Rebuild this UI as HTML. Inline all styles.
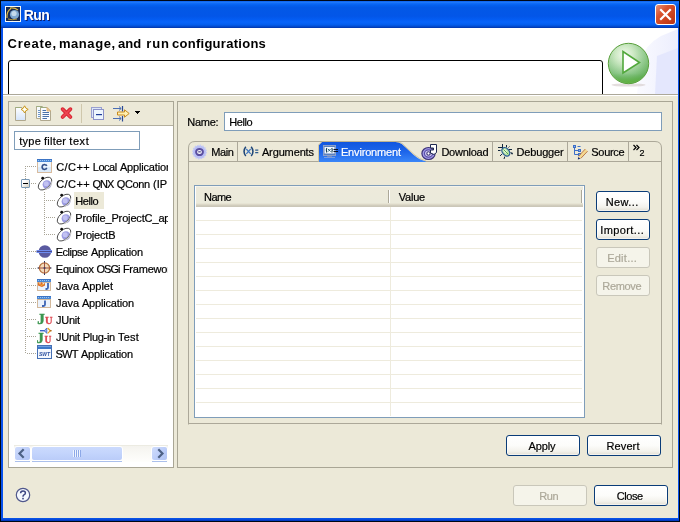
<!DOCTYPE html>
<html><head><meta charset="utf-8"><title>Run</title>
<style>
html,body{margin:0;padding:0}
body{width:680px;height:522px;overflow:hidden;position:relative;background:#0A3BD8;font-family:"Liberation Sans",sans-serif;font-size:11px}
div,span,svg{position:absolute}
.t{white-space:pre;-webkit-text-stroke:0.2px currentColor}.t.b{-webkit-text-stroke:0}
.ic{left:0;top:0}
.btn{border:1px solid #0A3C78;border-radius:3px;background:linear-gradient(#FFFFFF 0%,#FCFCFA 50%,#F3F2EC 80%,#E2DFD3 100%);box-shadow:inset 0 0 0 1px rgba(255,255,255,.55)}
.btn.dis{border-color:#C9C7BA;background:#F5F4EA;box-shadow:none}
.hd{height:1px;background:repeating-linear-gradient(90deg,#A8A496 0 1px,transparent 1px 2px)}
.vd{width:1px;background:repeating-linear-gradient(180deg,#A8A496 0 1px,transparent 1px 2px)}
.pane{border:1px solid #A9A695}
</style></head><body>
<div id="root" style="left:0;top:0;width:680px;height:522px;will-change:transform">
<!-- frame -->
<div style="left:0;top:0;width:680px;height:522px;background:#000714"></div>
<div style="left:1px;top:1px;width:678px;height:520px;background:#0852EC"></div><div style="left:1px;top:518px;width:678px;height:3px;background:linear-gradient(180deg,#0A58EA,#0648DA,#0232B4)"></div>
<!-- title bar -->
<div style="left:1px;top:1px;width:678px;height:27px;background:linear-gradient(180deg,#0A5EEE 0%,#1E78F8 5%,#0C68F6 10%,#0460EE 16%,#0358E6 24%,#0356E8 56%,#045CF2 68%,#0864FA 78%,#045EEE 87%,#0350D8 93%,#0240BC 97%,#0236AC 100%)"></div>
<svg style="left:5px;top:6px" width="16" height="16" viewBox="0 0 16 16"><rect x="0" y="0" width="16" height="16" fill="#F8F8F4"/><rect x="1" y="1" width="14" height="14" fill="#18284E"/><circle cx="9.500" cy="8.500" r="4.600" fill="#7FA8D0"/><circle cx="9" cy="7.500" r="2.600" fill="#C4DAEC"/><path d="M2 12 Q1.500 5 6 2.500 M5 2 Q10 1.500 13 4" fill="none" stroke="#D8B84A" stroke-width="1.200"/><path d="M3 13 Q7 14.500 12 13" fill="none" stroke="#B89A3A" stroke-width="1"/></svg>
<span class="t b" style="left:23.7135px;top:7px;font-size:14px;line-height:16px;letter-spacing:-0.573px;color:#fff;font-weight:bold;text-shadow:1px 1px 0 #0A1E6E;">Run</span>
<!-- close button -->
<div style="left:655px;top:4px;width:19px;height:19px;border:1px solid #fff;border-radius:3px;background:linear-gradient(135deg,#E8937A 0%,#D9532E 35%,#C8401C 70%,#B83414 100%)"></div>
<svg style="left:655px;top:4px" width="21" height="21" viewBox="0 0 21 21"><path d="M6 6 L15 15 M15 6 L6 15" stroke="#fff" stroke-width="2.2" stroke-linecap="square"/></svg>
<!-- header (white) -->
<div style="left:3px;top:28px;width:675px;height:66px;background:#fff"></div>
<svg style="left:603px;top:28px" width="75" height="66" viewBox="0 0 75 66"><defs><linearGradient id="lv" x1="0" x2="1"><stop offset="0" stop-color="#FAFAFF"/><stop offset="1" stop-color="#ECEEFD"/></linearGradient></defs><path d="M75 1 L58 8 Q42 17 38 32 L34 66 L75 66Z" fill="url(#lv)"/><path d="M75 20 L54 28 L52 66 L75 66Z" fill="#E2E6FD" opacity=".9"/></svg>
<span class="t b" style="left:7.58013px;top:36px;font-size:13px;line-height:15px;letter-spacing:0.760px;color:#000;font-weight:bold;">Create,</span><span class="t b" style="left:58.8893px;top:36px;font-size:13px;line-height:15px;letter-spacing:0.579px;color:#000;font-weight:bold;">manage,</span><span class="t b" style="left:117.879px;top:36px;font-size:13px;line-height:15px;letter-spacing:0.158px;color:#000;font-weight:bold;">and</span><span class="t b" style="left:146.241px;top:36px;font-size:13px;line-height:15px;letter-spacing:0.882px;color:#000;font-weight:bold;">run</span><span class="t b" style="left:171.94px;top:36px;font-size:13px;line-height:15px;letter-spacing:0.280px;color:#000;font-weight:bold;">configurations</span>
<div style="left:8px;top:60px;width:593px;height:40px;border:1px solid #000;border-radius:3px 3px 0 0;background:#fff;clip-path:inset(0 0 7px 0)"></div>
<!-- play icon -->
<svg style="left:604px;top:40px" width="50" height="50" viewBox="0 0 50 50"><defs><radialGradient id="pg" cx=".4" cy=".3" r=".75"><stop offset="0" stop-color="#F6FBF2"/><stop offset=".3" stop-color="#CFEAC6"/><stop offset=".65" stop-color="#94CC90"/><stop offset="1" stop-color="#62AE56"/></radialGradient><linearGradient id="pg2" x1="0" y1="0" x2="0" y2="1"><stop offset="0" stop-color="#fff" stop-opacity=".0"/><stop offset=".75" stop-color="#3C9A3C" stop-opacity=".12"/><stop offset="1" stop-color="#5CB030" stop-opacity=".75"/></linearGradient></defs><ellipse cx="24.5" cy="45" rx="17" ry="1.6" fill="#D8D0D0" opacity=".7"/><circle cx="24.5" cy="23.5" r="20.2" fill="url(#pg)" stroke="#5AA03C" stroke-width="1"/><circle cx="24.5" cy="23.5" r="19.5" fill="url(#pg2)"/><path d="M19 11.5 L19 33 L35.5 22.5Z" fill="#fff" stroke="#52A83C" stroke-width="1.6" stroke-linejoin="miter"/></svg>
<!-- separator -->
<div style="left:3px;top:94px;width:675px;height:1px;background:#ACA899"></div>
<div style="left:3px;top:95px;width:675px;height:1px;background:#fff"></div>
<!-- body beige -->
<div style="left:3px;top:96px;width:675px;height:422px;background:#ECE9D8"></div>
<!-- left pane -->
<div class="pane" style="left:8px;top:101px;width:164px;height:365px;background:#fff"></div>
<div style="left:9px;top:102px;width:164px;height:23px;background:#ECE9D8"></div>
<div style="left:9px;top:125px;width:164px;height:1px;background:#B4B0A0"></div>
<!-- toolbar icons -->
<svg style="left:14px;top:105px" width="16" height="17" viewBox="0 0 16 17"><defs><linearGradient id="pgr" x1="0" y1="0" x2="0" y2="1"><stop offset="0" stop-color="#fff"/><stop offset="1" stop-color="#D4E4FA"/></linearGradient></defs><path d="M1.500 2.500H8L11.500 6V15.500H1.500Z" fill="url(#pgr)" stroke="#B0A88E" stroke-width="1"/><path d="M1.500 2.500H7" stroke="#8CB070" stroke-dasharray="1 1"/><path d="M10.600 0.800 L11.900 3.100 L14.200 4.400 L11.900 5.700 L10.600 8 L9.300 5.700 L7 4.400 L9.300 3.100Z" fill="#FFF8D0" stroke="#C8961E" stroke-width="1"/><path d="M10.600 2.600V6.200M8.800 4.400H12.400" stroke="#fff" stroke-width=".9"/></svg>
<svg style="left:36px;top:105px" width="17" height="17" viewBox="0 0 17 17"><path d="M0.500 1.500H6.500L8.500 3.500V13.500H0.500Z" fill="#F6FAFE" stroke="#B0A88E"/><path d="M0.500 1.500H6" stroke="#8CB070" stroke-dasharray="1 1"/><path d="M2 5.500H4.500M2 7.500H4.500M2 9.500H4.500M2 11.500H4.500" stroke="#6E96C8"/><path d="M4.500 2.500H11L14.500 6V15.500H4.500Z" fill="#FAFCFF" stroke="#B0A88E"/><path d="M4.500 2.500H10" stroke="#8CB070" stroke-dasharray="1 1"/><path d="M11 2.500V6H14.500Z" fill="#F0D098" stroke="#D8A868" stroke-width=".8"/><path d="M6.500 5.500H10M6.500 7.500H13M6.500 9.500H13M6.500 11.500H13M6.500 13.500H11" stroke="#4A72AA"/></svg>
<svg style="left:59px;top:105px" width="16" height="17" viewBox="0 0 16 17"><path d="M3.6 4.2 L11.4 12 M11.4 4.2 L3.6 12" stroke="#D82430" stroke-width="3.8" stroke-linecap="round"/><path d="M3.6 4.2 L11.4 12 M11.4 4.2 L3.6 12" stroke="#EC4650" stroke-width="1.8" stroke-linecap="round"/></svg>
<div style="left:81px;top:104px;width:1px;height:19px;background:#CFC7AC"></div>
<svg style="left:90px;top:105px" width="16" height="17" viewBox="0 0 16 17"><rect x="1.5" y="2.5" width="10" height="10" fill="#DCE6F8" stroke="#9AA0D0"/><rect x="3.5" y="4.5" width="10" height="10" fill="#EEF6FE" stroke="#8C92C8"/><rect x="6" y="9" width="6" height="1.2" fill="#1E3C96"/></svg>
<svg style="left:112px;top:104px" width="20" height="19" viewBox="0 0 20 19"><path d="M1 4.5H9M7 2.5L9.2 4.5L7 6.5" stroke="#4A6EB4" fill="none"/><path d="M10.5 2V7.5" stroke="#2C4A96" stroke-width="1.2"/><path d="M1 14.5H9M7 12.5L9.2 14.5L7 16.5" stroke="#4A6EB4" fill="none"/><path d="M10.5 12V17.5" stroke="#2C4A96" stroke-width="1.2"/><path d="M5.5 8H12.5V5.8L17.2 9.5L12.5 13.2V11H5.5Z" fill="#FFF0B0" stroke="#C88A1E" stroke-width="1"/></svg>
<div style="left:135px;top:111px;width:5px;height:1px;background:#000"></div><div style="left:136px;top:112px;width:3px;height:1px;background:#000"></div><div style="left:137px;top:113px;width:1px;height:1px;background:#000"></div>
<!-- filter box -->
<div style="left:14px;top:131px;width:124px;height:17px;border:1px solid #7F9DB9;background:#fff"></div>
<span class="t" style="left:19.1504px;top:135px;font-size:11px;line-height:13px;letter-spacing:0.301px;color:#000;">type</span><span class="t" style="left:44.1016px;top:135px;font-size:11px;line-height:13px;letter-spacing:0.203px;color:#000;">filter</span><span class="t" style="left:69.2832px;top:135px;font-size:11px;line-height:13px;letter-spacing:0.566px;color:#000;">text</span>
<!-- tree -->
<div style="left:14px;top:155px;width:154px;height:290px;overflow:hidden;background:#fff">
<div style="left:-14px;top:-155px;width:300px;height:400px">
<div class="vd" style="left:25px;top:166px;height:13px"></div><div class="vd" style="left:25px;top:188px;height:166px"></div><div class="hd" style="left:27px;top:166px;width:10px"></div><div class="hd" style="left:31px;top:183px;width:6px"></div><div class="hd" style="left:46px;top:200px;width:10px"></div><div class="hd" style="left:46px;top:217px;width:10px"></div><div class="hd" style="left:46px;top:234px;width:10px"></div><div class="hd" style="left:27px;top:251px;width:10px"></div><div class="hd" style="left:27px;top:268px;width:10px"></div><div class="hd" style="left:27px;top:285px;width:10px"></div><div class="hd" style="left:27px;top:302px;width:10px"></div><div class="hd" style="left:27px;top:319px;width:10px"></div><div class="hd" style="left:27px;top:336px;width:10px"></div><div class="hd" style="left:27px;top:353px;width:10px"></div><div class="vd" style="left:44px;top:192px;height:43px"></div><div style="position:absolute;left:37px;top:159px;width:16px;height:16px"><svg class="ic" width="16" height="16" viewBox="0 0 16 16"><rect x="0" y="0" width="15" height="3" fill="#4A88D6"/><rect x="0" y="0" width="15" height="1" fill="#3C74C4"/><path d="M1 1.500H14" stroke="#9CC4F0" stroke-dasharray="1 1"/><rect x="0.5" y="3.5" width="14" height="10" fill="#DCEBFA" stroke="#C08040" stroke-dasharray="1 1"/><rect x="1" y="3" width="13" height="5" fill="#EEF6FD"/><text x="7.300" y="11.300" font-family="Liberation Sans" font-weight="bold" font-size="8.600" fill="#2C4A84" stroke="#2C4A84" stroke-width=".4" text-anchor="middle">C</text></svg></div><span class="t" style="left:56.2203px;top:161px;font-size:11px;line-height:13px;letter-spacing:0.441px;color:#000;">C/C++</span><span class="t" style="left:92.7703px;top:161px;font-size:11px;line-height:13px;letter-spacing:-0.459px;color:#000;">Local</span><span class="t" style="left:119.917px;top:161px;font-size:11px;line-height:13px;letter-spacing:-0.166px;color:#000;">Application</span><div style="position:absolute;left:37px;top:176px;width:16px;height:16px"><svg class="ic" width="17" height="16" viewBox="0 0 17 16"><circle cx="10" cy="8.6" r="4.4" fill="#9C9CE2"/><circle cx="9.2" cy="7.8" r="2.5" fill="#C2C2F2"/><ellipse cx="8" cy="7.6" rx="8" ry="4.7" transform="rotate(-42 8 7.6)" fill="none" stroke="#484848" stroke-width=".9"/><path d="M8.6 13.6 A 8 4.7 -42 0 0 14.8 5.4" fill="none" stroke="#C8C8C8" stroke-width="1.2"/><circle cx="5.7" cy="2.2" r="1.4" fill="#101010"/></svg></div><span class="t" style="left:56.2203px;top:178px;font-size:11px;line-height:13px;letter-spacing:0.441px;color:#000;">C/C++</span><span class="t" style="left:92.526px;top:178px;font-size:11px;line-height:13px;letter-spacing:-0.948px;color:#000;">QNX</span><span class="t" style="left:116.814px;top:178px;font-size:11px;line-height:13px;letter-spacing:-0.372px;color:#000;">QConn</span><span class="t" style="left:152.99px;top:178px;font-size:11px;line-height:13px;letter-spacing:-0.021px;color:#000;">(IP</span><div style="position:absolute;left:74px;top:192px;width:30px;height:17px;background:#ECE9D8"></div><div style="position:absolute;left:56px;top:193px;width:16px;height:16px"><svg class="ic" width="17" height="16" viewBox="0 0 17 16"><circle cx="10" cy="8.6" r="4.4" fill="#9C9CE2"/><circle cx="9.2" cy="7.8" r="2.5" fill="#C2C2F2"/><ellipse cx="8" cy="7.6" rx="8" ry="4.7" transform="rotate(-42 8 7.6)" fill="none" stroke="#484848" stroke-width=".9"/><path d="M8.6 13.6 A 8 4.7 -42 0 0 14.8 5.4" fill="none" stroke="#C8C8C8" stroke-width="1.2"/><circle cx="5.7" cy="2.2" r="1.4" fill="#101010"/></svg></div><span class="t" style="left:75.1922px;top:195px;font-size:11px;line-height:13px;letter-spacing:-0.416px;color:#000;">Hello</span><div style="position:absolute;left:56px;top:210px;width:16px;height:16px"><svg class="ic" width="17" height="16" viewBox="0 0 17 16"><circle cx="10" cy="8.6" r="4.4" fill="#9C9CE2"/><circle cx="9.2" cy="7.8" r="2.5" fill="#C2C2F2"/><ellipse cx="8" cy="7.6" rx="8" ry="4.7" transform="rotate(-42 8 7.6)" fill="none" stroke="#484848" stroke-width=".9"/><path d="M8.6 13.6 A 8 4.7 -42 0 0 14.8 5.4" fill="none" stroke="#C8C8C8" stroke-width="1.2"/><circle cx="5.7" cy="2.2" r="1.4" fill="#101010"/></svg></div><span class="t" style="left:75.3262px;top:212px;font-size:11px;line-height:13px;letter-spacing:-0.148px;color:#000;">Profile_ProjectC_app</span><div style="position:absolute;left:56px;top:227px;width:16px;height:16px"><svg class="ic" width="17" height="16" viewBox="0 0 17 16"><circle cx="10" cy="8.6" r="4.4" fill="#9C9CE2"/><circle cx="9.2" cy="7.8" r="2.5" fill="#C2C2F2"/><ellipse cx="8" cy="7.6" rx="8" ry="4.7" transform="rotate(-42 8 7.6)" fill="none" stroke="#484848" stroke-width=".9"/><path d="M8.6 13.6 A 8 4.7 -42 0 0 14.8 5.4" fill="none" stroke="#C8C8C8" stroke-width="1.2"/><circle cx="5.7" cy="2.2" r="1.4" fill="#101010"/></svg></div><span class="t" style="left:75.3014px;top:229px;font-size:11px;line-height:13px;letter-spacing:-0.197px;color:#000;">ProjectB</span><div style="position:absolute;left:37px;top:244px;width:16px;height:16px"><svg class="ic" width="16" height="16" viewBox="0 0 16 16" style="overflow:visible"><circle cx="7.9" cy="7.5" r="6.3" fill="#5A5AA0"/><rect x="-0.5" y="6" width="15.5" height="1" fill="#6E8CF0"/><rect x="-0.5" y="8" width="15.5" height="1" fill="#6E8CF0"/><rect x="-0.5" y="7" width="15.5" height="1" fill="#4A4A8C"/></svg></div><span class="t" style="left:55.7522px;top:246px;font-size:11px;line-height:13px;letter-spacing:-0.496px;color:#000;">Eclipse</span><span class="t" style="left:90.9169px;top:246px;font-size:11px;line-height:13px;letter-spacing:-0.166px;color:#000;">Application</span><div style="position:absolute;left:37px;top:261px;width:16px;height:16px"><svg class="ic" width="16" height="16" viewBox="0 0 16 16"><circle cx="7.5" cy="7" r="5.1" fill="#F2DCBC" stroke="#B4703C" stroke-width="1.3"/><path d="M7.5 0.500V13.500M1 7H14" stroke="#A0503C" stroke-width="1"/><circle cx="7.5" cy="7" r="1" fill="#3C3C64"/><rect x="7" y="0" width="1" height="1.500" fill="#283C64"/><rect x="7" y="12.500" width="1" height="1.500" fill="#283C64"/><rect x="0.5" y="6.500" width="1.500" height="1" fill="#283C64"/><rect x="13" y="6.500" width="1.500" height="1" fill="#283C64"/></svg></div><span class="t" style="left:55.8739px;top:263px;font-size:11px;line-height:13px;letter-spacing:-0.252px;color:#000;">Equinox</span><span class="t" style="left:96.5117px;top:263px;font-size:11px;line-height:13px;letter-spacing:-0.977px;color:#000;">OSGi</span><span class="t" style="left:122.888px;top:263px;font-size:11px;line-height:13px;letter-spacing:-0.224px;color:#000;">Framework</span><div style="position:absolute;left:37px;top:278px;width:16px;height:16px"><svg class="ic" width="16" height="16" viewBox="0 0 16 16"><rect x="0" y="1" width="14" height="3" fill="#4A88D6"/><rect x="0" y="1" width="14" height="1" fill="#3C74C4"/><path d="M1 2.500H13" stroke="#9CC4F0" stroke-dasharray="1 1"/><rect x="0.5" y="4.5" width="13" height="8" fill="#EAF2FC" stroke="#B07838" stroke-dasharray="1 1"/><path d="M1 4 L3 6 L4.500 4 L6.500 6.500 L8 4.500 L8 7.500 L5 9 L1 7.500Z" fill="#E06A28"/><path d="M2 5.500 L4 7.500 L7 6" stroke="#F0B43C" stroke-width="1" fill="none"/><path d="M11 5V9.500Q11 11 9.500 11H8.500" stroke="#3C64B4" stroke-width="1.8" fill="none"/></svg></div><span class="t" style="left:55.9688px;top:280px;font-size:11px;line-height:13px;letter-spacing:-0.062px;color:#000;">Java</span><span class="t" style="left:81.9831px;top:280px;font-size:11px;line-height:13px;letter-spacing:-0.034px;color:#000;">Applet</span><div style="position:absolute;left:37px;top:295px;width:16px;height:16px"><svg class="ic" width="16" height="16" viewBox="0 0 16 16"><rect x="0" y="1" width="14" height="3" fill="#4A88D6"/><rect x="0" y="1" width="14" height="1" fill="#3C74C4"/><path d="M1 2.500H13" stroke="#9CC4F0" stroke-dasharray="1 1"/><rect x="0.5" y="4.5" width="13" height="8" fill="#EAF2FC" stroke="#B07838" stroke-dasharray="1 1"/><path d="M8 5.500V9.500Q8 11 6.500 11H5" stroke="#3C64B4" stroke-width="1.8" fill="none"/></svg></div><span class="t" style="left:55.9688px;top:297px;font-size:11px;line-height:13px;letter-spacing:-0.062px;color:#000;">Java</span><span class="t" style="left:81.9169px;top:297px;font-size:11px;line-height:13px;letter-spacing:-0.166px;color:#000;">Application</span><div style="position:absolute;left:37px;top:312px;width:16px;height:16px"><svg class="ic" width="16" height="16" viewBox="0 0 16 16"><text x="0.3" y="12" font-family="Liberation Serif" font-weight="bold" font-size="15" fill="#3C9650" stroke="#3C9650" stroke-width=".5">J</text><text x="8" y="12" font-family="Liberation Serif" font-weight="bold" font-size="10.5" fill="#DC4650" stroke="#DC4650" stroke-width=".3">U</text></svg></div><span class="t" style="left:55.8937px;top:314px;font-size:11px;line-height:13px;letter-spacing:-0.212px;color:#000;">JUnit</span><div style="position:absolute;left:37px;top:329px;width:16px;height:16px"><svg class="ic" width="16" height="18" viewBox="0 0 16 18" style="top:-2px"><text x="-0.500" y="15.800" font-family="Liberation Serif" font-weight="bold" font-size="14.500" fill="#3C9650" stroke="#3C9650" stroke-width=".5">J</text><text x="7.400" y="15.800" font-family="Liberation Serif" font-weight="bold" font-size="9.500" fill="#DC4650" stroke="#DC4650" stroke-width=".3">U</text><rect x="3" y="3" width="5" height="1.400" fill="#3C64C8"/><path d="M9.800 1 L7.300 3.700 L9.800 6.400Z" fill="#A0B4E6" stroke="#3C64C8" stroke-width=".8"/><path d="M10.600 1 L13.400 3.700 L10.600 6.400" fill="none" stroke="#E6A01E" stroke-width="1.200"/><rect x="12.800" y="3" width="1.800" height="1.400" fill="#B46E1E"/></svg></div><span class="t" style="left:55.8937px;top:331px;font-size:11px;line-height:13px;letter-spacing:-0.212px;color:#000;">JUnit</span><span class="t" style="left:82.8393px;top:331px;font-size:11px;line-height:13px;letter-spacing:-0.321px;color:#000;">Plug-in</span><span class="t" style="left:118.102px;top:331px;font-size:11px;line-height:13px;letter-spacing:0.203px;color:#000;">Test</span><div style="position:absolute;left:37px;top:346px;width:16px;height:16px"><svg class="ic" width="16" height="16" viewBox="0 0 16 16" style="top:-1px"><rect x="0.5" y="0.5" width="14" height="13" fill="#F4F8FE" stroke="#4670B4"/><rect x="1" y="1" width="13" height="3" fill="#3C78C8"/><rect x="1" y="1" width="13" height="1" fill="#6EA0E0"/><text x="7.5" y="10.600" font-family="Liberation Sans" font-weight="bold" font-style="italic" font-size="6.200" fill="#2C50A0" text-anchor="middle" textLength="11" lengthAdjust="spacingAndGlyphs">SWT</text></svg></div><span class="t" style="left:55.5911px;top:348px;font-size:11px;line-height:13px;letter-spacing:-0.818px;color:#000;">SWT</span><span class="t" style="left:80.9169px;top:348px;font-size:11px;line-height:13px;letter-spacing:-0.166px;color:#000;">Application</span>
<!-- expand box -->
<div style="left:21px;top:179px;width:7px;height:7px;border:1px solid #7898B5;border-radius:1px;background:linear-gradient(135deg,#fff 30%,#D2CEC0 100%)"></div>
<div style="left:23px;top:183px;width:5px;height:1px;background:#000"></div>
</div></div>
<!-- scrollbar -->
<div style="left:14px;top:445px;width:154px;height:17px;background:linear-gradient(180deg,#ECEBE2 0,#ECEBE2 1px,#F4F3EE 1px,#F8F7F3 6px,#FEFEFC 17px)"></div>
<div style="left:15px;top:461px;width:15px;height:1px;background:#ABC0EC"></div>
<div style="left:152px;top:461px;width:15px;height:1px;background:#ABC0EC"></div>
<div style="left:32px;top:461px;width:90px;height:1px;background:#ABC0EC"></div>
<div style="left:14px;top:446px;width:15px;height:13px;border:1px solid #fff;border-radius:3px;background:linear-gradient(135deg,#D0DDFC 0%,#BCCDF9 55%,#B0C3F4 100%)"></div>
<svg style="left:14px;top:447px" width="17" height="13" viewBox="0 0 17 13"><path d="M9.700 2.200 L5.500 6.500 L9.700 10.800" fill="none" stroke="#4D6185" stroke-width="2.200"/></svg>
<div style="left:151px;top:446px;width:15px;height:13px;border:1px solid #fff;border-radius:3px;background:linear-gradient(135deg,#D0DDFC 0%,#BCCDF9 55%,#B0C3F4 100%)"></div>
<svg style="left:151px;top:447px" width="17" height="13" viewBox="0 0 17 13"><path d="M7.300 2.200 L11.500 6.500 L7.300 10.800" fill="none" stroke="#4D6185" stroke-width="2.200"/></svg>
<div style="left:31px;top:446px;width:90px;height:13px;border:1px solid #fff;border-radius:3px;background:linear-gradient(180deg,#CBDAFD 0%,#C3D4FC 50%,#BACCF9 100%)"></div>
<div style="left:73px;top:450px;width:8px;height:7px;background:repeating-linear-gradient(90deg,#EEF4FE 0 1px,#8CA8E8 1px 2px)"></div>
<!-- right pane -->
<div class="pane" style="left:177px;top:101px;width:494px;height:365px"></div>
<span class="t" style="left:187.359px;top:116px;font-size:11px;line-height:13px;letter-spacing:-0.281px;color:#000;">Name:</span>
<div style="left:224px;top:112px;width:436px;height:17px;border:1px solid #7F9DB9;background:#fff"></div>
<span class="t" style="left:229.292px;top:116px;font-size:11px;line-height:13px;letter-spacing:-0.416px;color:#000;">Hello</span>
<!-- tab folder -->
<svg style="left:188px;top:141px" width="475" height="284" viewBox="0 0 475 284"><defs><linearGradient id="tb" x1="0" y1="0" x2="0" y2="1"><stop offset="0" stop-color="#1156DF"/><stop offset=".5" stop-color="#1E66EA"/><stop offset="1" stop-color="#3A86F8"/></linearGradient></defs>
<path d="M0.5 283.500 V7 Q0.5 0.5 7 0.500 H467 Q473.500 0.500 473.500 7 V283.500" fill="none" stroke="#ACA899"/>
<path d="M0 282.500 H474" stroke="#ACA899"/>
<path d="M0 20.500 H474" stroke="#ACA899"/>
<path d="M49.500 1V20M304.500 1V20M379.500 1V20M440.500 1V20" stroke="#ACA899"/>
<path d="M131 21 V4 L134 1 H207.500 Q210.800 1 213.800 2.900 L225.500 13.800 Q231 18.800 238 20.400 L238 21Z" fill="url(#tb)"/>
<path d="M130.500 21 V4 L134 0.500 H207.500 Q211 0.500 214.200 2.500 L226 13.400 Q231.500 18.300 238 20" fill="none" stroke="#C8B88C" stroke-opacity=".7"/>
</svg>
<!-- tab icons -->
<svg style="left:192px;top:144px" width="16" height="16" viewBox="0 0 16 16"><circle cx="7.500" cy="8" r="6.600" fill="#B8BEF4" stroke="#C4CAF6" stroke-width="1.600" stroke-dasharray="1.400 1.200"/><ellipse cx="7.500" cy="8" rx="3.400" ry="3.100" fill="#fff" stroke="#5A4FA0" stroke-width="2"/><rect x="6.200" y="7.300" width="2.600" height="1.100" fill="#3A3080"/></svg>
<svg style="left:242px;top:146px" width="18" height="12" viewBox="0 0 18 12"><path d="M3.800 0.800 Q0.300 5.400 3.800 10M9.200 0.800 Q12.700 5.400 9.200 10" fill="none" stroke="#1E4678" stroke-width="1.500"/><path d="M4.300 3 L8.700 7.800 M8.700 3 L4.300 7.800" stroke="#3C74BE" stroke-width="1.200"/><path d="M13.200 4.100H16.300M13.200 6.700H16.300" stroke="#2C5A8C" stroke-width="1.200"/></svg>
<svg style="left:322px;top:144px" width="20" height="16" viewBox="0 0 20 16"><rect x="1.500" y="1.500" width="12" height="10" fill="#5A80C0" stroke="#8CA0C8"/><rect x="2.500" y="3" width="10" height="6.500" fill="#F4FAFF"/><path d="M4.800 4 Q3.800 6.200 4.800 8.500M9.800 4 Q10.800 6.200 9.800 8.500" fill="none" stroke="#143C50" stroke-width="1.1"/><path d="M6 5 L8.600 7.600 M8.600 5 L6 7.600" stroke="#2C6482" stroke-width="1"/><path d="M11.500 5.500H16M11.500 7.500H16" stroke="#0A1428" stroke-width="1.1"/><rect x="5" y="12" width="5" height="1" fill="#6E8CC8"/><rect x="2" y="13" width="11" height="1" fill="#8CA8DC" opacity=".8"/></svg>
<svg style="left:421px;top:143px" width="18" height="18" viewBox="0 0 18 18"><ellipse cx="7.500" cy="10.500" rx="6.600" ry="6" fill="#A098E4" stroke="#3C3278" stroke-width="1.200"/><ellipse cx="7.500" cy="10.500" rx="4" ry="3.600" fill="#D6D2F8" stroke="#5A50AA" stroke-width="1.200"/><circle cx="7.500" cy="10.500" r="1.700" fill="#fff" stroke="#3C3278" stroke-width="1.100"/><path d="M9.500 1.500H15.500V9.500L13 11.500L9.500 10V7H12.500V5H9.500Z" fill="#fff" stroke="#1E2850" stroke-width="1"/></svg>
<svg style="left:497px;top:143px" width="18" height="18" viewBox="0 0 18 18"><path d="M5.500 1V6M1 4.500H6M9.500 2V4.500M1 7.500H3.500M3 13L5 11M7 16L7.800 13.500M12 6.500H15M13.500 9.500L16 10.500M11.500 4.500L12.500 3.500M14 10.500L15.500 11" stroke="#14283C" stroke-width="1" fill="none"/><ellipse cx="8.800" cy="8.800" rx="3.300" ry="4.700" transform="rotate(-40 8.800 8.800)" fill="#B4E2A4" stroke="#285A96" stroke-width="1.300"/><ellipse cx="8.300" cy="8.300" rx="1.500" ry="2.600" transform="rotate(-40 8.300 8.300)" fill="#E0F4D6"/><path d="M6.600 6.600 L11.200 11.200" stroke="#4AA03C" stroke-width=".9"/></svg>
<svg style="left:572px;top:144px" width="18" height="18" viewBox="0 0 18 18"><rect x="1.500" y="1.500" width="2" height="2" fill="#8CB4E6" stroke="#3C6EC8"/><path d="M5.500 2.500H8.500" stroke="#3C6EC8"/><path d="M2.500 4V10.500H6M2.500 6.500H6" stroke="#3C6EC8" fill="none"/><rect x="6.500" y="5.500" width="2" height="2" fill="#8CB4E6" stroke="#3C6EC8"/><rect x="6.500" y="9.500" width="2" height="2" fill="#8CB4E6" stroke="#3C6EC8"/><path d="M14.500 6 L7.500 13.500" stroke="#F4D890" stroke-width="3"/><path d="M13.300 5 L6.500 12.300 M15.600 7.200 L8.800 14.400" stroke="#B46E3C" stroke-width=".9"/><path d="M6.200 13 L5.800 15.600 L8.400 14.800Z" fill="#14286E"/></svg>
<span class="t" style="left:211.37px;top:146px;font-size:11px;line-height:13px;letter-spacing:-0.461px;color:#000;">Main</span><span class="t" style="left:261.933px;top:146px;font-size:11px;line-height:13px;letter-spacing:-0.134px;color:#000;">Arguments</span><span class="t" style="left:340.92px;top:146px;font-size:11px;line-height:13px;letter-spacing:-0.161px;color:#fff;">Environment</span><span class="t" style="left:441.38px;top:146px;font-size:11px;line-height:13px;letter-spacing:-0.240px;color:#000;">Download</span><span class="t" style="left:516.517px;top:146px;font-size:11px;line-height:13px;letter-spacing:-0.166px;color:#000;">Debugger</span><span class="t" style="left:591.345px;top:146px;font-size:11px;line-height:13px;letter-spacing:-0.310px;color:#000;">Source</span>
<svg style="left:632px;top:144px" width="14" height="12" viewBox="0 0 14 12"><path d="M1.500 1 L4 3.500 L1.500 6 M4.500 1 L7 3.500 L4.500 6" fill="none" stroke="#000" stroke-width="1.200"/></svg>
<span class="t" style="left:639.492px;top:148px;font-size:9px;line-height:11px;letter-spacing:-0.016px;color:#000;">2</span>
<!-- table -->
<div style="left:194px;top:185px;width:389px;height:231px;border:1px solid #7F9DB9;background:#fff"></div>
<div style="left:196px;top:186px;width:387px;height:21px;background:linear-gradient(180deg,#FDFDFA 0,#EDEADB 1px,#EBEADB 17px,#E2DECD 18px,#D6D2C2 19px,#CBC7B8 20px,#CBC7B8 21px)"></div>
<div style="left:388px;top:190px;width:1px;height:13px;background:#ACA899"></div><div style="left:389px;top:190px;width:1px;height:13px;background:#fff"></div>
<div style="left:581px;top:190px;width:1px;height:13px;background:#ACA899"></div><div style="left:582px;top:190px;width:1px;height:13px;background:#fff"></div>
<div style="position:absolute;left:196px;top:220px;width:386px;height:1px;background:#EEEBDD"></div><div style="position:absolute;left:196px;top:234px;width:386px;height:1px;background:#EEEBDD"></div><div style="position:absolute;left:196px;top:248px;width:386px;height:1px;background:#EEEBDD"></div><div style="position:absolute;left:196px;top:262px;width:386px;height:1px;background:#EEEBDD"></div><div style="position:absolute;left:196px;top:276px;width:386px;height:1px;background:#EEEBDD"></div><div style="position:absolute;left:196px;top:290px;width:386px;height:1px;background:#EEEBDD"></div><div style="position:absolute;left:196px;top:304px;width:386px;height:1px;background:#EEEBDD"></div><div style="position:absolute;left:196px;top:318px;width:386px;height:1px;background:#EEEBDD"></div><div style="position:absolute;left:196px;top:332px;width:386px;height:1px;background:#EEEBDD"></div><div style="position:absolute;left:196px;top:346px;width:386px;height:1px;background:#EEEBDD"></div><div style="position:absolute;left:196px;top:360px;width:386px;height:1px;background:#EEEBDD"></div><div style="position:absolute;left:196px;top:374px;width:386px;height:1px;background:#EEEBDD"></div><div style="position:absolute;left:196px;top:388px;width:386px;height:1px;background:#EEEBDD"></div><div style="position:absolute;left:196px;top:402px;width:386px;height:1px;background:#EEEBDD"></div>
<div style="left:390px;top:207px;width:1px;height:209px;background:#EEEBDD"></div>
<span class="t" style="left:204.107px;top:191px;font-size:11px;line-height:13px;letter-spacing:-0.586px;color:#000;">Name</span><span class="t" style="left:398.867px;top:191px;font-size:11px;line-height:13px;letter-spacing:-0.266px;color:#000;">Value</span>
<div class="btn" style="left:596px;top:191px;width:52px;height:19px"></div><span class="t" style="left:605.702px;top:196px;font-size:11px;line-height:13px;letter-spacing:0.404px;color:#000;">New...</span><div class="btn" style="left:596px;top:219px;width:52px;height:19px"></div><span class="t" style="left:600.203px;top:224px;font-size:11px;line-height:13px;letter-spacing:0.406px;color:#000;">Import...</span><div class="btn dis" style="left:596px;top:247px;width:52px;height:19px"></div><span class="t" style="left:607.134px;top:252px;font-size:11px;line-height:13px;letter-spacing:0.268px;color:#ACA899;">Edit...</span><div class="btn dis" style="left:596px;top:275px;width:52px;height:19px"></div><span class="t" style="left:602.336px;top:280px;font-size:11px;line-height:13px;letter-spacing:-0.328px;color:#ACA899;">Remove</span>
<div class="btn" style="left:506px;top:435px;width:72px;height:19px"></div><span class="t" style="left:528.447px;top:440px;font-size:11px;line-height:13px;letter-spacing:-0.106px;color:#000;">Apply</span><div class="btn" style="left:587px;top:435px;width:72px;height:19px"></div><span class="t" style="left:606.549px;top:440px;font-size:11px;line-height:13px;letter-spacing:0.099px;color:#000;">Revert</span><div class="btn dis" style="left:513px;top:485px;width:72px;height:19px"></div><span class="t" style="left:539.302px;top:490px;font-size:11px;line-height:13px;letter-spacing:-0.396px;color:#ACA899;">Run</span><div class="btn" style="left:594px;top:485px;width:72px;height:19px"></div><span class="t" style="left:616.788px;top:490px;font-size:11px;line-height:13px;letter-spacing:-0.425px;color:#000;">Close</span>
<!-- help -->
<svg style="left:15px;top:487px" width="16" height="16" viewBox="0 0 16 16"><circle cx="8" cy="8" r="6.700" fill="#F4F8FE" stroke="#50588C" stroke-width="1.200"/><path d="M5.600 6.300 Q5.600 3.900 8 3.900 Q10.400 3.900 10.400 5.900 Q10.400 7.200 8.900 7.900 Q8 8.400 8 9.700" fill="none" stroke="#3C4682" stroke-width="1.500"/><rect x="7.200" y="10.800" width="1.600" height="1.600" fill="#3C4682"/></svg>
</div>
</body></html>
